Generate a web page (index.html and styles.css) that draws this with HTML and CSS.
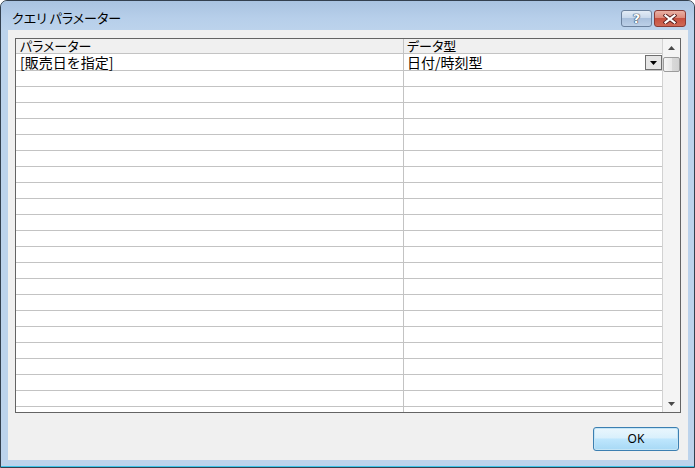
FILE: index.html
```html
<!DOCTYPE html>
<html lang="ja">
<head>
<meta charset="utf-8">
<title>クエリ パラメーター</title>
<link rel="stylesheet" href="styles.css">
</head>
<body>
<div class="window">
  <div class="titlebar">
    <span class="title">クエリ パラメーター</span>
    <div class="capbtns">
      <div class="cap help">?</div>
      <div class="cap close">
        <svg width="14" height="10" viewBox="0 0 14 10"><path d="M2.5 1.5 L11.5 8.5 M11.5 1.5 L2.5 8.5" stroke="#5a2020" stroke-width="4" stroke-linecap="square"/><path d="M2.5 1.5 L11.5 8.5 M11.5 1.5 L2.5 8.5" stroke="#ffffff" stroke-width="2.2" stroke-linecap="square"/></svg>
      </div>
    </div>
  </div>
  <div class="client">
    <div class="gridbox">
      <div class="grid">
        <div class="row head"><div class="c1">パラメーター</div><div class="c2">データ型</div></div>
        <div class="row first"><div class="c1 kanji">[販売日を指定]</div><div class="c2 kanji"><span class="val">日付/時刻型</span><span class="dd"><svg width="7" height="4" viewBox="0 0 7 4"><path d="M0 0 H7 L3.5 4 Z" fill="#000"/></svg></span></div></div>
        <div class="row"><div class="c1"></div><div class="c2"></div></div>
        <div class="row"><div class="c1"></div><div class="c2"></div></div>
        <div class="row"><div class="c1"></div><div class="c2"></div></div>
        <div class="row"><div class="c1"></div><div class="c2"></div></div>
        <div class="row"><div class="c1"></div><div class="c2"></div></div>
        <div class="row"><div class="c1"></div><div class="c2"></div></div>
        <div class="row"><div class="c1"></div><div class="c2"></div></div>
        <div class="row"><div class="c1"></div><div class="c2"></div></div>
        <div class="row"><div class="c1"></div><div class="c2"></div></div>
        <div class="row"><div class="c1"></div><div class="c2"></div></div>
        <div class="row"><div class="c1"></div><div class="c2"></div></div>
        <div class="row"><div class="c1"></div><div class="c2"></div></div>
        <div class="row"><div class="c1"></div><div class="c2"></div></div>
        <div class="row"><div class="c1"></div><div class="c2"></div></div>
        <div class="row"><div class="c1"></div><div class="c2"></div></div>
        <div class="row"><div class="c1"></div><div class="c2"></div></div>
        <div class="row"><div class="c1"></div><div class="c2"></div></div>
        <div class="row"><div class="c1"></div><div class="c2"></div></div>
        <div class="row"><div class="c1"></div><div class="c2"></div></div>
        <div class="row"><div class="c1"></div><div class="c2"></div></div>
        <div class="row"><div class="c1"></div><div class="c2"></div></div>
        <div class="row"><div class="c1"></div><div class="c2"></div></div>
      </div>
      <div class="vscroll">
        <div class="arrow"><svg width="7" height="4" viewBox="0 0 7 4"><path d="M3.5 0 L7 4 H0 Z" fill="#4a4a4a"/></svg></div>
        <div class="thumb"></div>
        <div class="track"></div>
        <div class="arrow"><svg width="7" height="4" viewBox="0 0 7 4"><path d="M0 0 H7 L3.5 4 Z" fill="#4a4a4a"/></svg></div>
      </div>
    </div>
    <div class="footer">
      <button class="ok">OK</button>
    </div>
  </div>
</div>
</body>
</html>
```
FILE: styles.css
```css
* { box-sizing: border-box; }
html, body { margin: 0; padding: 0; background: #ffffff; }
body { font-family: "Noto Sans CJK JP", "Noto Sans", sans-serif; }

.window {
  width: 695px;
  height: 468px;
  border: 1px solid #33404f;
  border-radius: 7px 7px 0 0;
  background: #bcd3ec;
  padding: 0 6px 7px 7px;
  display: flex;
  flex-direction: column;
  box-shadow: inset 0 -1px 0 #3fc3e8;
  overflow: hidden;
}

.titlebar {
  height: 29px;
  margin: 0 -6px 0 -7px;
  padding: 0 8px 0 11px;
  display: flex;
  align-items: flex-start;
  background: linear-gradient(#a9c3e1 0%, #b7cfea 60%, #bcd3ec 100%);
  border-radius: 6px 6px 0 0;
}
.title {
  flex: 1;
  margin-top: 8px;
  font-size: 13px;
  line-height: 18px;
  color: #000;
  font-feature-settings: "palt";
}
.capbtns {
  display: flex;
  gap: 2px;
  margin-top: 9px;
}
.cap {
  height: 17px;
  border-radius: 3px;
  display: flex;
  align-items: center;
  justify-content: center;
}
.help {
  width: 31px;
  border: 1px solid #6b819d;
  background: linear-gradient(#e3ecf6 0%, #c9d9ec 45%, #a9c0dc 50%, #bcd0e8 100%);
  font-family: "DejaVu Sans", sans-serif;
  font-weight: bold;
  font-size: 13px;
  line-height: 15px;
  color: #ffffff;
  text-shadow: 0 0 1px #2a3b55, 0 0 1px #2a3b55, 0 0 1px #2a3b55;
}
.close {
  width: 32px;
  border: 1px solid #8a3b35;
  background: linear-gradient(#eab1a5 0%, #dc8a7b 45%, #c7503f 50%, #d06a57 100%);
}

.client {
  flex: 1;
  background: #f0f0f0;
  padding: 8px 7px 9px 7px;
  display: flex;
  flex-direction: column;
}

.gridbox {
  height: 375px;
  border: 1px solid #646464;
  background: #ffffff;
  display: flex;
  overflow: hidden;
}
.grid {
  width: 646px;
  display: flex;
  flex-direction: column;
  overflow: hidden;
}
.row {
  display: flex;
  flex: none;
  height: 16px;
  border-bottom: 1px solid #c3c3c3;
  font-size: 13px;
  line-height: 15px;
  color: #000;
}
.row.head {
  height: 15px;
  background: #f0f0f0;
  line-height: 14px;
  font-feature-settings: "palt";
}
.row.first { height: 17px; }
.c1 {
  width: 388px;
  border-right: 1px solid #c3c3c3;
  padding-left: 4px;
  white-space: nowrap;
}
.c2 {
  flex: 1;
  padding-left: 3px;
  display: flex;
  white-space: nowrap;
}
.kanji {
  font-size: 14px;
  line-height: 16px;
}
.val { flex: 1; }
.dd {
  width: 17px;
  height: 15px;
  margin-top: 1px;
  border: 1px solid #6e6e6e;
  background: #e6e6e6;
  display: flex;
  align-items: center;
  justify-content: center;
}

.vscroll {
  width: 18px;
  border-left: 1px solid #d2d2d2;
  background: #f4f4f4;
  display: flex;
  flex-direction: column;
}
.arrow {
  height: 17px;
  display: flex;
  align-items: center;
  justify-content: center;
}
.thumb {
  height: 15px;
  margin: 1px 0 0 0;
  border: 1px solid #9b9b9b;
  border-radius: 2px;
  background: linear-gradient(90deg, #f6f6f6 0%, #e9e9e9 50%, #d9d9d9 51%, #d2d2d2 100%);
}
.track { flex: 1; }

.footer {
  display: flex;
  justify-content: flex-end;
  margin-top: 14px;
}
.ok {
  width: 86px;
  height: 24px;
  margin: 0 2px 0 0;
  padding: 0;
  border: 1px solid #3c7fb1;
  border-radius: 3px;
  background: linear-gradient(#eaf6fd 0%, #d9f0fc 45%, #bee6fd 50%, #a7d9f5 100%);
  box-shadow: inset 0 0 0 1px #c4e5f6;
  font-family: "Noto Sans", "Liberation Sans", sans-serif;
  font-size: 12px;
  line-height: 20px;
  color: #000;
}
```
